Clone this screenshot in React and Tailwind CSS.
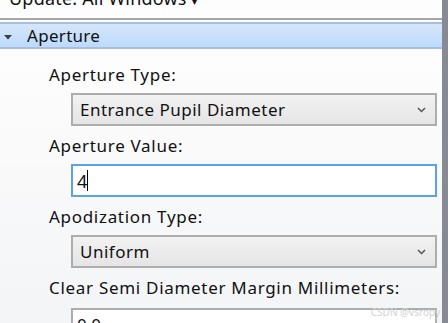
import React from 'react';

const font = { fontFamily: '"Noto Sans", "Open Sans", sans-serif' };

const Chevron = () => (
  <svg width="9" height="6" viewBox="0 0 9 6" className="shrink-0">
    <path d="M1 1 L4.5 4.5 L8 1" fill="none" stroke="#555" strokeWidth="1.5" />
  </svg>
);

const Select = ({ value }) => (
  <div className="mt-[7px] mr-[5px] ml-[22px] h-[33px] flex items-center justify-between border-2 border-[#adadad] bg-gradient-to-b from-[#f2f2f2] to-[#e5e5e5] pl-[7px] pr-[9px]">
    <span className="text-[17px] tracking-[0.5px] leading-none text-[#111]">{value}</span>
    <Chevron />
  </div>
);

const Field = ({ label, children }) => (
  <div className="pt-[9px] first:pt-0">
    <div className="text-[17px] tracking-[0.7px] leading-[22px] text-[#111]">{label}</div>
    {children}
  </div>
);

export default function App() {
  return (
    <div className="h-[323px] w-[448px] overflow-hidden flex" style={font}>
      <div className="flex-1 flex flex-col relative">
        <div className="shrink-0 h-[20px] bg-[#fdfdfd] border-b-2 border-[#a6a6a6] overflow-hidden">
          <div className="mt-[-12px] ml-[9px] text-[18px] tracking-[0.2px] leading-[20px] text-[#111]">
            Update: All Windows <span className="text-[10px]">▾</span>
          </div>
        </div>
        <div className="shrink-0 h-[2px] bg-[#fdfdfd]" />
        <div className="shrink-0 h-[27px] border-y-2 border-[#a8bfdb] bg-gradient-to-b from-[#d6e6f9] to-[#bcdafe] flex items-center">
          <svg width="8" height="5" viewBox="0 0 8 5" className="ml-[4px] mt-[3px]">
            <path d="M0 0 H8 L4 4.5 Z" fill="#3d3d3d" />
          </svg>
          <span className="ml-[15px] text-[17px] tracking-[0.3px] leading-none text-[#111]">Aperture</span>
        </div>
        <div className="flex-1 bg-gradient-to-b from-[#fdfdfd] to-[#f3f4f6] pt-[15px] pl-[49px]">
          <Field label="Aperture Type:">
            <Select value="Entrance Pupil Diameter" />
          </Field>
          <Field label="Aperture Value:">
            <div className="mt-[7px] mr-[5px] ml-[22px] h-[33px] flex items-center border-2 border-[#5aa1e7] bg-white pl-[4px]">
              <span className="text-[18px] leading-none text-[#111]">4</span>
              <span className="w-px h-[21px] bg-black" />
            </div>
          </Field>
          <Field label="Apodization Type:">
            <Select value="Uniform" />
          </Field>
          <Field label="Clear Semi Diameter Margin Millimeters:">
            <div className="mt-[9px] mr-[5px] ml-[22px] h-[33px] border-2 border-[#adadad] bg-white pl-[4px] pt-[3px]">
              <span className="text-[17px] leading-none text-[#111]">0.0</span>
            </div>
          </Field>
        </div>
        <div className="absolute right-[2px] bottom-[6px] text-[10px] leading-none text-[#d2d2d2]">
          CSDN @vsropy
        </div>
      </div>
      <div className="w-[6px] bg-[#878a93]" />
    </div>
  );
}
